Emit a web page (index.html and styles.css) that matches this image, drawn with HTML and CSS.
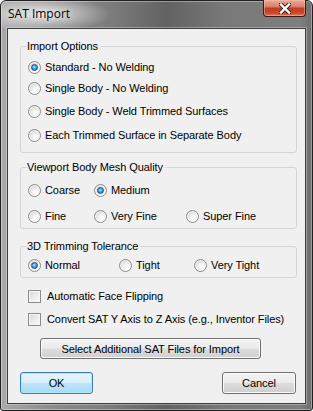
FILE: index.html
```html
<!DOCTYPE html>
<html>
<head>
<meta charset="utf-8">
<link rel="stylesheet" href="styles.css">
</head>
<body>
<div class="window">
  <div class="titlebar">
    <span class="title">SAT Import</span>
    <span class="close">
      <svg width="12" height="11" viewBox="0 0 12 11">
        <path d="M2 1.5 L10 9.5 M10 1.5 L2 9.5" stroke="#3b2a26" stroke-width="4.4" stroke-linecap="square"/>
        <path d="M2 1.5 L10 9.5 M10 1.5 L2 9.5" stroke="#ffffff" stroke-width="2.4" stroke-linecap="square"/>
      </svg>
    </span>
  </div>
  <div class="client">
    <fieldset class="group g1">
      <legend>Import Options</legend>
      <div class="opt"><span class="radio on"></span>Standard - No Welding</div>
      <div class="opt"><span class="radio"></span>Single Body - No Welding</div>
      <div class="opt"><span class="radio"></span>Single Body - Weld Trimmed Surfaces</div>
      <div class="opt"><span class="radio"></span>Each Trimmed Surface in Separate Body</div>
    </fieldset>
    <fieldset class="group g2">
      <legend>Viewport Body Mesh Quality</legend>
      <div class="grid mesh">
        <div class="opt"><span class="radio"></span>Coarse</div>
        <div class="opt"><span class="radio on"></span>Medium</div>
        <div></div>
        <div class="opt"><span class="radio"></span>Fine</div>
        <div class="opt"><span class="radio"></span>Very Fine</div>
        <div class="opt"><span class="radio"></span>Super Fine</div>
      </div>
    </fieldset>
    <fieldset class="group g3">
      <legend>3D Trimming Tolerance</legend>
      <div class="grid tol">
        <div class="opt"><span class="radio on"></span>Normal</div>
        <div class="opt"><span class="radio"></span>Tight</div>
        <div class="opt"><span class="radio"></span>Very Tight</div>
      </div>
    </fieldset>
    <div class="checks">
      <div class="opt"><span class="check"></span>Automatic Face Flipping</div>
      <div class="opt"><span class="check"></span>Convert SAT Y Axis to Z Axis (e.g., Inventor Files)</div>
    </div>
    <div class="btn select">Select Additional SAT Files for Import</div>
    <div class="actions">
      <div class="btn ok">OK</div>
      <div class="btn cancel">Cancel</div>
    </div>
  </div>
</div>
</body>
</html>
```
FILE: styles.css
```css
html, body {
  margin: 0;
  padding: 0;
  background: #ffffff;
}

.window {
  width: 313px;
  height: 411px;
  box-sizing: border-box;
  border: 1px solid #202020;
  border-radius: 6px 6px 3px 3px;
  background:
    radial-gradient(ellipse 70px 18px at 40px 13px, rgba(240,240,240,0.9), rgba(240,240,240,0) 100%),
    linear-gradient(to right, #a9a9a9 0, #8c8c8c 50px, #7c7c7c 110px, #626262 165px, #797979 225px, #7e7e7e 300px, #6a6a6a 313px);
  display: flex;
  flex-direction: column;
  box-shadow: inset 0 0 0 1px rgba(255,255,255,0.35);
  font-family: "Liberation Sans", Arial, sans-serif;
  font-size: 11px;
  letter-spacing: -0.08px;
  color: #000;
}

.titlebar {
  height: 27px;
  display: flex;
  justify-content: space-between;
  align-items: flex-start;
  padding-left: 7px;
  padding-right: 6px;
}

.title {
  font-family: "Open Sans", "Noto Sans", sans-serif;
  font-size: 12px;
  letter-spacing: 0;
  line-height: 16px;
  margin-top: 5px;
  color: #000;
  text-shadow: 0 0 6px rgba(255,255,255,0.8);
}

.close {
  width: 43px;
  height: 17px;
  margin-top: -1px;
  box-sizing: border-box;
  border: 1px solid #3a1a14;
  border-top: none;
  border-radius: 0 0 4px 4px;
  background: linear-gradient(#e9a898 0%, #d98570 40%, #c33c22 52%, #c5482c 80%, #dc7a58 100%);
  box-shadow: inset 0 0 0 1px rgba(255,200,180,0.45);
  display: flex;
  align-items: center;
  justify-content: center;
}

.client {
  flex: 1;
  margin: 0 6px 6px 6px;
  border: 1px solid #3e3e3e;
  box-shadow: 0 0 0 1px rgba(255,255,255,0.3);
  background: #f0f0f0;
  padding: 11px 8px 0 12px;
  display: flex;
  flex-direction: column;
}

.group {
  margin: 0;
  border: 1px solid #d5d5d5;
  border-radius: 3px;
  padding: 0 6px 0 7px;
  min-width: 0;
}

.group legend {
  padding: 0 2px 0 0;
  margin-left: -1px;
  line-height: 13px;
  height: 13px;
}

.opt {
  display: flex;
  align-items: center;
  gap: 4px;
  height: 13px;
  line-height: 13px;
  white-space: nowrap;
}

.g1 {
  padding-top: 8px;
  padding-bottom: 10px;
}
.g1 .opt:nth-of-type(2) { margin-top: 8px; }
.g1 .opt:nth-of-type(3) { margin-top: 10px; }
.g1 .opt:nth-of-type(4) { margin-top: 11px; }

.g2 {
  margin-top: 8px;
  padding-top: 10px;
  padding-bottom: 5px;
}

.g3 {
  margin-top: 11px;
  padding-top: 6px;
  padding-bottom: 5px;
}

.grid {
  display: grid;
}
.mesh {
  grid-template-columns: 66px 92px auto;
  row-gap: 13px;
}
.tol {
  grid-template-columns: 91px 75px auto;
}

.radio {
  flex: none;
  width: 13px;
  height: 13px;
  box-sizing: border-box;
  border-radius: 50%;
  border: 1px solid #8c8c8c;
  background: radial-gradient(circle at 65% 70%, #ffffff 0, #f2f2f2 35%, #d9d9d9 75%, #cacaca 100%);
  box-shadow: inset 0 0 0 1px rgba(255,255,255,0.6);
}
.radio.on::after {
  content: "";
  display: block;
  width: 7px;
  height: 7px;
  margin: 2px;
  box-sizing: border-box;
  border-radius: 50%;
  border: 1px solid #1f4f7e;
  background: radial-gradient(circle at 45% 40%, #b6e8ff 0, #48a8e6 40%, #1668ad 100%);
}

.checks {
  margin-top: 12px;
  padding-left: 8px;
  display: flex;
  flex-direction: column;
  gap: 10px;
}

.check {
  flex: none;
  width: 13px;
  height: 13px;
  box-sizing: border-box;
  border: 1px solid #8c8c8c;
  background: linear-gradient(135deg, #d5d5d5 0, #ebebeb 50%, #fbfbfb 100%);
  box-shadow: inset 0 0 0 1px #f6f6f6;
  margin-right: 2px;
}

.btn {
  box-sizing: border-box;
  border: 1px solid #707070;
  border-radius: 3px;
  background: linear-gradient(#f3f3f3 0%, #ebebeb 48%, #dddddd 52%, #cfcfcf 100%);
  box-shadow: inset 0 0 0 1px #fbfbfb;
  display: flex;
  align-items: center;
  justify-content: center;
  white-space: nowrap;
}

.select {
  margin-top: 12px;
  margin-left: 20px;
  width: 221px;
  height: 21px;
}

.actions {
  margin-top: 13px;
  display: flex;
  justify-content: space-between;
  padding-right: 1px;
}

.ok {
  width: 73px;
  height: 22px;
  border-color: #3c7fb1;
  background: linear-gradient(#e9f6fd 0%, #d7effc 48%, #bde5fc 52%, #a8d9f5 100%);
  box-shadow: inset 0 0 0 1px #b0e6fb;
}

.cancel {
  width: 74px;
  height: 22px;
}
```
